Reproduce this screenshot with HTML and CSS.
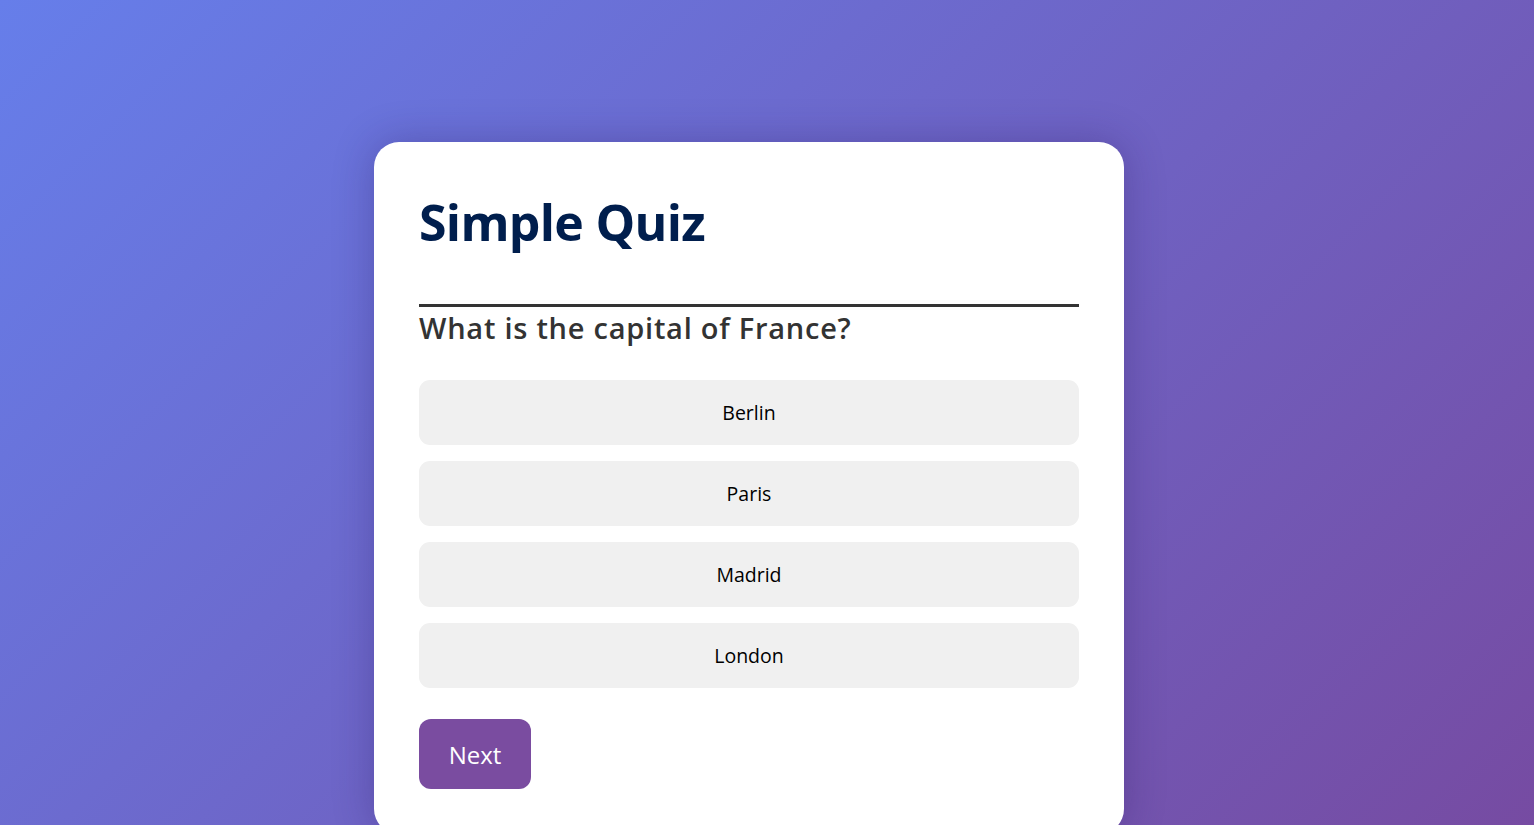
FILE: index.html
```html
<!DOCTYPE html>
<html lang="en">
<head>
<meta charset="utf-8">
<title>Simple Quiz</title>
<link rel="stylesheet" href="styles.css">
</head>
<body>
<div class="app">
  <h1 class="title">Simple Quiz</h1>
  <div class="quiz">
    <h2 class="question">What is the capital of France?</h2>
    <div class="answers">
      <button class="answer">Berlin</button>
      <button class="answer">Paris</button>
      <button class="answer">Madrid</button>
      <button class="answer">London</button>
    </div>
    <button class="next">Next</button>
  </div>
</div>
</body>
</html>
```
FILE: styles.css
```css
* { box-sizing: border-box; }
html, body { margin: 0; padding: 0; }
body {
  height: 825px;
  overflow: hidden;
  padding-right: 36px;
  background: linear-gradient(135deg, #667eea 0%, #764ba2 100%);
  font-family: "Open Sans", "Liberation Sans", sans-serif;
}
.app {
  width: 750px;
  margin: 142px auto 0;
  background: #fff;
  border-radius: 25px;
  padding: 45px;
  box-shadow: 0 0 40px rgba(40, 20, 90, 0.3);
}
.title {
  margin: 0;
  font-size: 50px;
  font-weight: 700;
  color: #001e4d;
  line-height: 70px;
  height: 120px;
  border-bottom: 3px solid #333;
  letter-spacing: -0.7px;
}
.question {
  margin: 0 0 31px;
  font-size: 29px;
  font-weight: 600;
  color: #333;
  line-height: 42px;
  letter-spacing: 0.75px;
}
.answers {
  display: flex;
  flex-direction: column;
  gap: 16px;
}
.answer {
  height: 65px;
  width: 100%;
  border: none;
  background: #f0f0f0;
  border-radius: 11px;
  font-family: inherit;
  font-size: 19.5px;
  color: #000;
}
.next {
  margin-top: 31px;
  width: 112px;
  height: 70px;
  border: none;
  border-radius: 12px;
  background: #7a4ca0;
  color: #fff;
  font-family: inherit;
  font-size: 24px;
}
```
